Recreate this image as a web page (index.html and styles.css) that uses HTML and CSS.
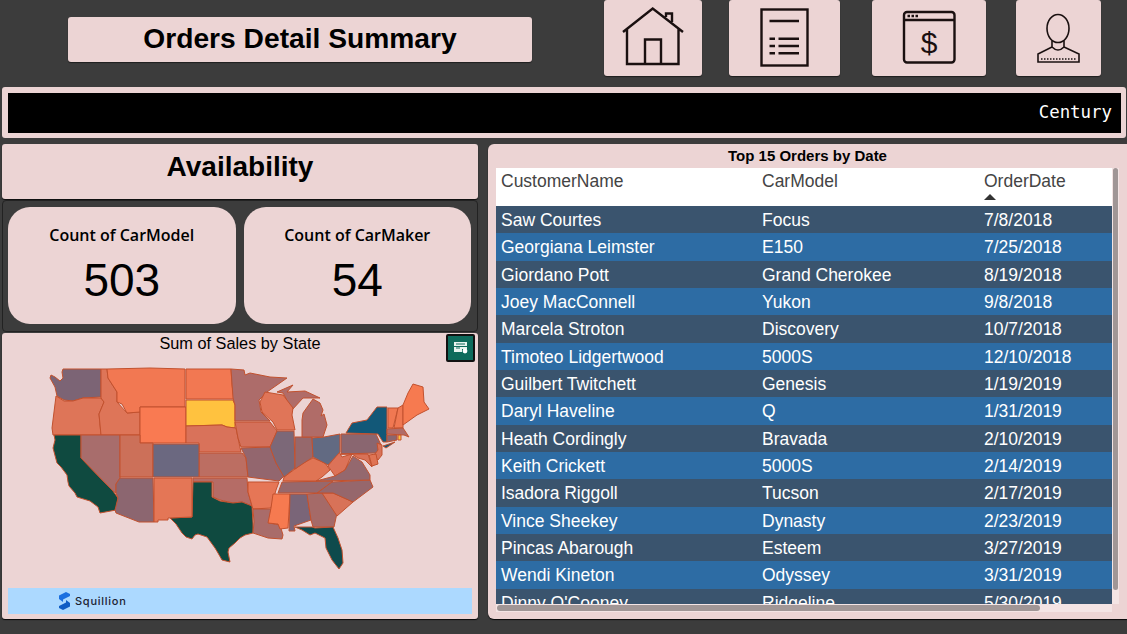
FILE: index.html
```html
<!DOCTYPE html>
<html lang="en">
<head>
  <meta charset="UTF-8" />
  <title>Orders Detail Summary</title>
  <link rel="stylesheet" href="styles.css">
</head>
<body>

  <header class="top">
    <h1 class="title">Orders Detail Summary</h1>
    <nav class="nav">
      <a class="nav-btn home">
        <svg width="98" height="76" viewBox="0 0 98 76" class="icon">
          <path d="M19 32 48.7 8.5 79 32M23 29V64H74.5V29M41 64V39.5H57V64M62 17V13.5H68V22"/>
        </svg>
      </a>
      <a class="nav-btn doc">
        <svg width="111" height="76" viewBox="0 0 111 76" class="icon">
          <rect x="32.5" y="9.5" width="46" height="56"/>
          <path d="M40.5 21H70M40.5 38.7H46M49.5 38.7H70M40.5 46H46M49.5 46H70M40.5 53.3H46M49.5 53.3H70"/>
        </svg>
      </a>
      <a class="nav-btn bill">
        <svg width="114" height="76" viewBox="0 0 114 76" class="icon">
          <rect x="32" y="12" width="50.5" height="50.5" rx="3"/>
          <path d="M32 20H82.5M35.5 16H38M39.5 16H42M43.5 16H46"/>
          <text x="57" y="53" class="dollar">$</text>
        </svg>
      </a>
      <a class="nav-btn user">
        <svg width="85" height="76" viewBox="0 0 85 76" class="icon thin">
          <ellipse cx="42" cy="28.5" rx="11" ry="14"/>
          <path d="M36 41V47L22 54V62H63V54L48 47V41M36 47Q42 53 48 47"/>
          <path d="M25 59H60" class="dots"/>
        </svg>
      </a>
    </nav>
  </header>

  <section class="ticker">
    <div class="ticker-inner">Century</div>
  </section>

  <main class="content">
    <div class="left">
      <div class="availability">Availability</div>

      <div class="kpis">
        <div class="kpi">
          <div class="kpi-label">Count of CarModel</div>
          <div class="kpi-value">503</div>
        </div>
        <div class="kpi">
          <div class="kpi-label">Count of CarMaker</div>
          <div class="kpi-value">54</div>
        </div>
      </div>

      <div class="map-card">
        <div class="map-title">Sum of Sales by State</div>
        <button class="export">
          <svg width="14" height="12" viewBox="0 0 14 12">
            <path d="M0 0H13V4H0ZM0 5H13V7H8V10H0Z" fill="#e8f4f0"/>
            <path d="M2 2H11M2 6H6" stroke="#0e6b5c" stroke-width="1"/>
            <circle cx="11" cy="9" r="2.4" fill="#fff"/>
          </svg>
        </button>
        <svg class="map" width="476" height="234" viewBox="2 353 476 234">
          <g stroke="#c2512e" stroke-width="1" stroke-linejoin="round">
            <polygon fill="#7c6475" points="63,369 101,369 101,397 83,398 73,401 64,400 57,396 55,387 50,378 51,375 55,377 60,381 63,378 62,372"/>
            <polygon fill="#de7558" points="56,396 64,401 73,401 83,398 101,398 104,402 99,414 101,435 53,435 52,428 54,412"/>
            <polygon fill="#de7558" points="101,369 107,369 108,378 117,392 117,402 127,413 140,412 140,435 101,435 99,414 104,402 101,398"/>
            <polygon fill="#f27852" points="107,369 150,368 185,369 185,407 140,407 140,412 127,413 122,404 117,402 117,392 108,378"/>
            <polygon fill="#f97a52" points="140,407 186,407 186,443 140,443"/>
            <polygon fill="#f27852" points="186,369 231,369 232,385 234,399 186,399"/>
            <polygon fill="#ffc23f" points="186,400 233,400 235,405 235,428 227,427 222,425 186,426"/>
            <polygon fill="#d9725a" points="186,426 222,425 227,427 236,428 238,438 241,452 199,452 199,443 186,443"/>
            <polygon fill="#bc6e62" points="199,453 242,453 246,458 248,477 199,477"/>
            <polygon fill="#b56c66" points="193,478 247,478 248,492 252,506 242,502 233,503 220,500 213,497 213,482 193,482"/>
            <polygon fill="#0f4a40" points="193,482 212,482 212,497 220,501 233,503 242,502 252,506 253,523 253,533 245,535 240,538 235,543 229,548 228,552 230,562 222,560 218,553 215,548 207,537 198,534 195,535 192,539 186,537 182,533 176,524 170,518 192,517"/>
            <polygon fill="#0f4a40" points="54,435 81,435 81,458 113,491 118,498 116,510 100,513 98,507 90,501 77,497 75,493 69,486 68,482 67,475 61,467 57,463 53,448 55,440"/>
            <polygon fill="#a86d6c" points="81,435 120,435 120,478 116,484 116,493 113,491 81,458"/>
            <polygon fill="#cc7059" points="120,435 140,435 140,443 153,443 153,477 120,477"/>
            <polygon fill="#6b6880" points="153,444 199,444 199,477 153,477"/>
            <polygon fill="#8c6670" points="120,478 153,478 154,522 139,522 116,513 115,510 118,498 116,493 116,484"/>
            <polygon fill="#e47656" points="154,478 192,478 192,517 168,518 168,520 158,520 158,522 154,522"/>
            <polygon fill="#ad6c6a" points="231,369 244,370 245,375 250,373 270,377 287,378 267,392 259,400 261,412 270,421 235,421 235,405 233,398"/>
            <polygon fill="#d4705a" points="235,422 270,422 277,431 270,447 241,447 238,438"/>
            <polygon fill="#93666e" points="241,448 270,447 276,463 284,476 279,481 248,477 246,458"/>
            <polygon fill="#e67656" points="248,482 279,482 276,490 271,508 253,509 252,506 248,492"/>
            <polygon fill="#a96c6a" points="253,509 271,509 269,523 280,525 283,535 282,539 268,538 253,533 254,522"/>
            <polygon fill="#f67a50" points="273,494 290,494 288,528 280,529 278,524 268,523 271,508"/>
            <polygon fill="#7a6578" points="290,494 307,494 311,520 294,526 295,531 289,531"/>
            <polygon fill="#a56a68" points="307,494 322,493 337,513 334,527 313,527 311,520"/>
            <polygon fill="#d87258" points="322,493 333,493 353,502 337,516"/>
            <polygon fill="#0e4a4c" points="295,527 312,527 315,528 333,527 338,538 342,550 343,563 339,569 332,560 326,548 325,538 315,533 310,535 302,530"/>
            <polygon fill="#96676c" points="317,493 332,482 370,480 373,487 353,502 333,493"/>
            <polygon fill="#97686c" points="278,493 282,482 333,481 317,493"/>
            <polygon fill="#e07454" points="283,481 284,477 295,469 303,463 313,458 325,463 330,470 322,477 316,481"/>
            <polygon fill="#dc7258" points="328,466 339,452 342,457 352,454 345,470 335,476"/>
            <polygon fill="#94686e" points="316,481 335,476 345,470 353,456 362,462 370,475 370,480"/>
            <polygon fill="#7c6878" points="277,431 294,431 295,468 284,477 276,463 270,447"/>
            <polygon fill="#96686c" points="295,437 312,437 313,457 295,469"/>
            <polygon fill="#626a82" points="312,438 324,437 340,434 340,452 328,465 313,457"/>
            <polygon fill="#b06c68" points="302,437 302,420 303,413 313,399 320,403 323,410 321,416 324,414 327,425 323,437"/>
            <polygon fill="#b06c68" points="277,392 293,385 287,392 305,391 320,398 303,398 292,410 283,393"/>
            <polygon fill="#e07558" points="260,402 265,392 283,395 293,408 292,415 295,430 277,430 273,422 262,412"/>
            <polygon fill="#8a6670" points="341,434 376,434 381,445 377,453 341,454"/>
            <polygon fill="#125878" points="346,433 352,423 367,420 377,407 387,407 387,442 383,442 378,434"/>
            <polygon fill="#125878" points="383,446 395,442 386,448"/>
            <polygon fill="#f07852" points="388,408 398,408 393,428 388,428"/>
            <polygon fill="#f07852" points="398,408 403,405 403,423 403,428 394,428"/>
            <polygon fill="#f67a50" points="403,405 408,393 413,384 423,387 424,402 429,409 417,415 410,420 403,425"/>
            <polygon fill="#b06c68" points="387,429 403,428 409,437 404,435 387,434"/>
            <polygon fill="#8a6670" points="387,435 397,435 397,440 387,442"/>
            <polygon fill="#ffc23f" points="398,435 401,435 401,440 398,440"/>
            <polygon fill="#d87258" points="377,443 382,445 382,455 378,460 374,455 378,450"/>
            <polygon fill="#d87258" points="341,454 368,454 372,467 365,460 358,458 352,454"/>
            <polygon fill="#e07454" points="369,455 376,454 378,464 372,466"/>
          </g>
        </svg>
        <div class="brand">
          <svg width="13" height="18" viewBox="0 0 13 18">
            <path d="M1 7V3.5L8 0 12 2V4L5 7.5V10L1 7Z" fill="#1a6fe0"/>
            <path d="M12 11V14.5L5 18 1 16V14L8 10.5V8L12 11Z" fill="#0f5cc4"/>
          </svg>
          <span class="brand-name">Squillion</span>
        </div>
      </div>
    </div>

    <div class="orders">
      <div class="orders-title">Top 15 Orders by Date</div>
      <div class="orders-body">
        <div class="grid">
          <div class="row head">
            <div>CustomerName</div>
            <div>CarModel</div>
            <div>OrderDate<span class="sort"></span></div>
          </div>
          <div class="row"><div>Saw Courtes</div><div>Focus</div><div>7/8/2018</div></div>
          <div class="row"><div>Georgiana Leimster</div><div>E150</div><div>7/25/2018</div></div>
          <div class="row"><div>Giordano Pott</div><div>Grand Cherokee</div><div>8/19/2018</div></div>
          <div class="row"><div>Joey MacConnell</div><div>Yukon</div><div>9/8/2018</div></div>
          <div class="row"><div>Marcela Stroton</div><div>Discovery</div><div>10/7/2018</div></div>
          <div class="row"><div>Timoteo Lidgertwood</div><div>5000S</div><div>12/10/2018</div></div>
          <div class="row"><div>Guilbert Twitchett</div><div>Genesis</div><div>1/19/2019</div></div>
          <div class="row"><div>Daryl Haveline</div><div>Q</div><div>1/31/2019</div></div>
          <div class="row"><div>Heath Cordingly</div><div>Bravada</div><div>2/10/2019</div></div>
          <div class="row"><div>Keith Crickett</div><div>5000S</div><div>2/14/2019</div></div>
          <div class="row"><div>Isadora Riggoll</div><div>Tucson</div><div>2/17/2019</div></div>
          <div class="row"><div>Vince Sheekey</div><div>Dynasty</div><div>2/23/2019</div></div>
          <div class="row"><div>Pincas Abarough</div><div>Esteem</div><div>3/27/2019</div></div>
          <div class="row"><div>Wendi Kineton</div><div>Odyssey</div><div>3/31/2019</div></div>
          <div class="row"><div>Dinny O'Cooney</div><div>Ridgeline</div><div>5/30/2019</div></div>
        </div>
        <div class="vbar"><div class="vthumb"></div></div>
      </div>
      <div class="hbar"><div class="hthumb"></div></div>
    </div>
  </main>

</body>
</html>
```

FILE: styles.css
```css
* {
  box-sizing: border-box;
}

html, body {
  margin: 0;
  height: 634px;
  overflow: hidden;
}

body {
  background: #3c3c3c;
  font-family: 'Liberation Sans', Arial, sans-serif;
  color: black;
}

.top {
  display: flex;
  height: 87px;
  padding-left: 68px;
}

.title {
  width: 464px;
  height: 45px;
  margin: 17px 0 0;
  background: #ecd4d4;
  border-radius: 3px;
  box-shadow: 0 1px 1px rgba(0, 0, 0, 0.5);
  font-size: 28.2px;
  line-height: 43px;
  text-align: center;
}

.nav {
  display: flex;
  align-items: flex-start;
  margin-left: 72px;
}

.nav-btn {
  display: block;
  height: 76px;
  background: #ecd4d4;
  border-radius: 3px;
  box-shadow: 0 1px 1px rgba(0, 0, 0, 0.5);
}

.nav-btn svg {
  display: block;
}

.home { width: 98px; }
.doc { width: 111px; margin-left: 27px; }
.bill { width: 114px; margin-left: 32px; }
.user { width: 85px; margin-left: 30px; }

.icon {
  fill: none;
  stroke: #1a1010;
  stroke-width: 2.4;
}

.icon.thin {
  stroke-width: 1.6;
}

.icon .dots {
  stroke-width: 1.4;
  stroke-dasharray: 1.5 1.5;
}

.dollar {
  fill: #1a1010;
  stroke: none;
  font-size: 30px;
  text-anchor: middle;
}

.ticker {
  height: 51px;
  margin: 0 1px 0 2px;
  padding: 6px 5px 5px 6px;
  background: #ecd4d4;
  border-radius: 3px;
}

.ticker-inner {
  height: 40px;
  padding-right: 9px;
  background: black;
  color: white;
  font-family: 'DejaVu Sans Mono', monospace;
  font-size: 17.4px;
  line-height: 39px;
  text-align: right;
}

.content {
  display: flex;
  margin-top: 6px;
  padding-left: 2px;
}

.left {
  width: 476px;
}

.availability {
  height: 55px;
  background: #ecd4d4;
  border-radius: 3px;
  box-shadow: 0 1px 1px rgba(0, 0, 0, 0.8);
  font-size: 28px;
  font-weight: bold;
  line-height: 46px;
  text-align: center;
}

.kpis {
  display: flex;
  gap: 8px;
  height: 132px;
  margin-top: 1px;
  padding: 6px 6px 7px 5px;
  border: 1px solid #222;
  border-radius: 4px;
}

.kpi {
  width: 228px;
  height: 117px;
  background: #ecd4d4;
  border-radius: 22px;
  text-align: center;
}

.kpi-label {
  margin-top: 18px;
  font-family: 'Open Sans', sans-serif;
  font-size: 16px;
  font-weight: 600;
  line-height: 20px;
}

.kpi-value {
  margin-top: 9px;
  font-size: 46px;
  line-height: 52px;
}

.map-card {
  position: relative;
  height: 286px;
  margin-top: 1px;
  background: #ecd4d4;
  border-radius: 3px;
  box-shadow: 0 1px 1px rgba(0, 0, 0, 0.9);
}

.map-title {
  height: 20px;
  font-size: 16.3px;
  line-height: 20px;
  text-align: center;
}

.export {
  position: absolute;
  top: 1px;
  right: 3px;
  display: flex;
  align-items: center;
  justify-content: center;
  width: 29px;
  height: 28px;
  padding: 0;
  background: #0e6b5c;
  border: 2px solid #111;
  border-radius: 2px;
}

.map {
  display: block;
  height: 234px;
  margin-bottom: 1px;
}

.brand {
  display: flex;
  align-items: center;
  gap: 4px;
  height: 26px;
  margin: 0 6px;
  padding-left: 50px;
  background: #acd9ff;
}

.brand-name {
  font-family: 'Inter', sans-serif;
  font-size: 11px;
  font-weight: 500;
  letter-spacing: 0.75px;
  color: #1c2333;
}

.orders {
  position: relative;
  width: 639px;
  height: 475px;
  margin-left: 10px;
  padding-left: 8px;
  background: #ecd4d4;
  border-radius: 6px 0 0 6px;
  box-shadow: 0 1px 1px rgba(0, 0, 0, 0.9);
}

.orders-title {
  height: 24px;
  margin-right: 8px;
  font-size: 15px;
  font-weight: bold;
  line-height: 24px;
  text-align: center;
}

.orders-body {
  position: relative;
  display: flex;
  width: 623px;
  height: 436px;
}

.grid {
  width: 616px;
  height: 436px;
  overflow: hidden;
  background: white;
}

.row {
  display: grid;
  grid-template-columns: 261px 222px 1fr;
  height: 27.35px;
  padding-left: 5px;
  color: white;
  font-size: 17.5px;
  line-height: 28px;
}

.row:nth-child(even) {
  background: #3a546e;
}

.row:nth-child(odd) {
  background: #2d6ca4;
}

.row.head {
  height: 38px;
  background: white;
  color: #444;
  line-height: 26px;
}

.sort {
  display: block;
  width: 0;
  height: 0;
  margin-top: 0;
  border-left: 6px solid transparent;
  border-right: 6px solid transparent;
  border-bottom: 6px solid #333;
}

.vbar {
  width: 7px;
  height: 436px;
  background: #f3e4e4;
}

.vthumb {
  width: 5px;
  height: 422px;
  margin-left: 1px;
  background: #a09696;
  border-radius: 3px;
}

.hbar {
  width: 616px;
  height: 8px;
  padding: 1px 0 1px 1px;
  background: #f3e4e4;
}

.hthumb {
  width: 543px;
  height: 6px;
  background: #a09696;
  border-radius: 3px;
}
```
